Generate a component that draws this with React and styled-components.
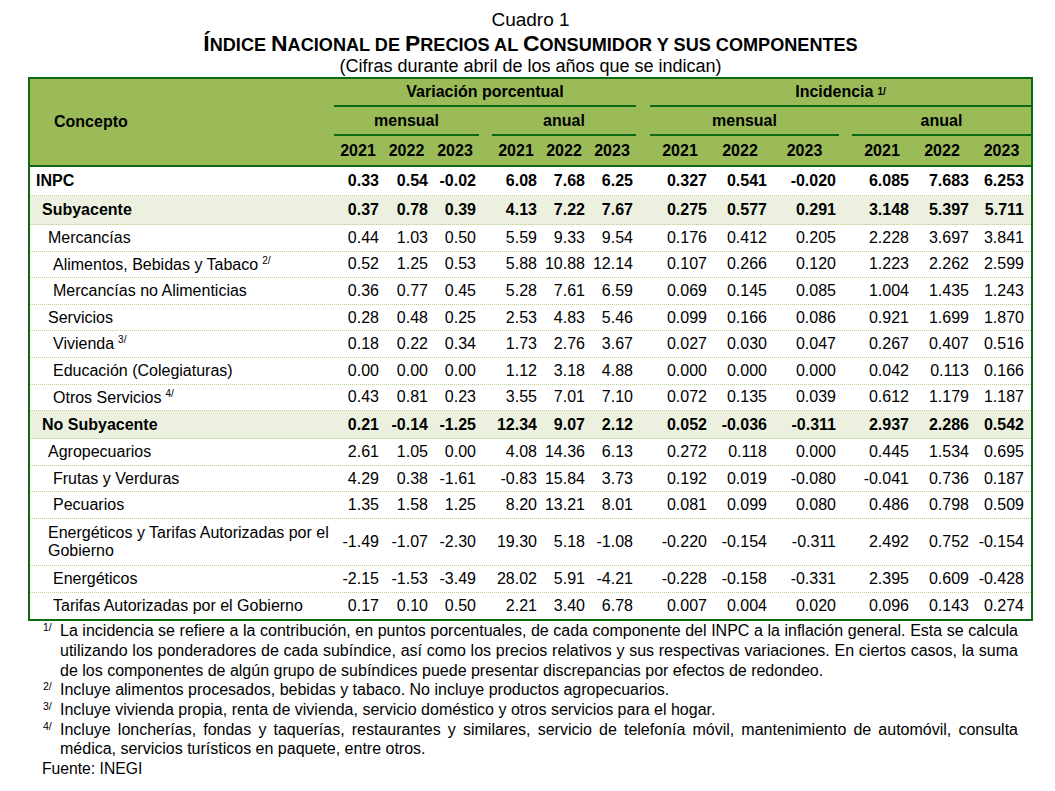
import React from 'react';
import styled, { createGlobalStyle } from 'styled-components';

const GlobalStyle = createGlobalStyle`
  * { box-sizing: border-box; }
  html, body { margin: 0; padding: 0; background: #ffffff; }
  body {
    font-family: "Liberation Sans", Arial, sans-serif;
    color: #000;
  }
`;

// concept | mensual x3 | gap | anual x3 | gap | mensual x3 | gap | anual x3
const COLS = '304px 48px 49px 48px 13px 48px 48px 48px 14px 60px 60px 69px 13px 60px 60px 59px';
const BORDER = '#0e6a12';
const HEAD_BG = '#9bbb59';
const BAND_BG = '#ebf1de';
const DOT = '#b9d18f';

const Page = styled.div`
  width: 1005px;
  margin-left: 28px;
  padding-top: 10px;
`;

const Heading = styled.header`
  display: flex;
  flex-direction: column;
  align-items: center;
  margin-bottom: 1px;
`;

const Cuadro = styled.div`
  font-size: 19px;
  line-height: 20px;
`;

const Title = styled.h1`
  margin: 1px 0 0;
  font-size: 22.9px;
  line-height: 24px;
  font-weight: bold;
  text-transform: uppercase;
`;

const SmallCap = styled.span`
  font-size: 18.1px;
`;

const Subtitle = styled.div`
  margin-top: 0;
  font-size: 18px;
  line-height: 19px;
`;

const Table = styled.div`
  border: 2px solid ${BORDER};
  font-size: 16px;
`;

const Head = styled.div`
  display: grid;
  grid-template-columns: ${COLS};
  grid-template-rows: 28px 29px 29px;
  background: ${HEAD_BG};
  border-bottom: 2px solid ${BORDER};
  font-weight: bold;
`;

const HeadCell = styled.div`
  grid-column: ${p => p.$col};
  grid-row: ${p => p.$row};
  display: flex;
  align-items: center;
  justify-content: center;
  border-bottom: ${p => (p.$rule ? `2px solid ${BORDER}` : 'none')};
`;

const ConceptHead = styled(HeadCell)`
  justify-content: flex-start;
  padding-left: 24px;
`;

const Sup = styled.sup`
  font-size: 10px;
  line-height: 0;
  margin-left: 4px;
  vertical-align: 6px;
`;

const Row = styled.div`
  display: grid;
  grid-template-columns: ${COLS};
  align-items: center;
  height: ${p => p.$h}px;
  background: ${p => (p.$band ? BAND_BG : '#fff')};
  font-weight: ${p => (p.$bold ? 'bold' : 'normal')};
  border-bottom: 1px dotted ${DOT};

  &:last-child {
    border-bottom: none;
  }
  & > :last-child {
    padding-right: 7px;
  }
`;

const Concept = styled.div`
  padding-left: ${p => [6, 12, 18, 23][p.$level]}px;
  line-height: 17.5px;
`;

const Num = styled.div`
  text-align: right;
  padding-right: 3px;
  white-space: nowrap;
`;

const Gap = styled.div``;

const Notes = styled.div`
  padding: 0 15px 0 14px;
  font-size: 16px;
  line-height: 19.7px;
`;

const Note = styled.div`
  display: grid;
  grid-template-columns: 18px 1fr;
`;

const Mark = styled.span`
  font-size: 10.5px;
  line-height: 12px;
  padding-left: 1px;
`;

const NoteText = styled.p`
  margin: 0;
  text-align: justify;
`;

const Source = styled.div`
  font-size: 15.7px;
`;

const smallCaps = text =>
  text.split('').map((ch, i) =>
    ch !== ' ' && ch === ch.toUpperCase() ? ch : <SmallCap key={i}>{ch}</SmallCap>
  );

const rows = [
  { name: 'INPC', level: 0, bold: true, h: 29, v: ['0.33', '0.54', '-0.02', '6.08', '7.68', '6.25', '0.327', '0.541', '-0.020', '6.085', '7.683', '6.253'] },
  { name: 'Subyacente', level: 1, bold: true, band: true, h: 29, v: ['0.37', '0.78', '0.39', '4.13', '7.22', '7.67', '0.275', '0.577', '0.291', '3.148', '5.397', '5.711'] },
  { name: 'Mercancías', level: 2, v: ['0.44', '1.03', '0.50', '5.59', '9.33', '9.54', '0.176', '0.412', '0.205', '2.228', '3.697', '3.841'] },
  { name: 'Alimentos, Bebidas y Tabaco', note: '2/', level: 3, v: ['0.52', '1.25', '0.53', '5.88', '10.88', '12.14', '0.107', '0.266', '0.120', '1.223', '2.262', '2.599'] },
  { name: 'Mercancías no Alimenticias', level: 3, v: ['0.36', '0.77', '0.45', '5.28', '7.61', '6.59', '0.069', '0.145', '0.085', '1.004', '1.435', '1.243'] },
  { name: 'Servicios', level: 2, v: ['0.28', '0.48', '0.25', '2.53', '4.83', '5.46', '0.099', '0.166', '0.086', '0.921', '1.699', '1.870'] },
  { name: 'Vivienda', note: '3/', level: 3, v: ['0.18', '0.22', '0.34', '1.73', '2.76', '3.67', '0.027', '0.030', '0.047', '0.267', '0.407', '0.516'] },
  { name: 'Educación (Colegiaturas)', level: 3, v: ['0.00', '0.00', '0.00', '1.12', '3.18', '4.88', '0.000', '0.000', '0.000', '0.042', '0.113', '0.166'] },
  { name: 'Otros Servicios', note: '4/', level: 3, v: ['0.43', '0.81', '0.23', '3.55', '7.01', '7.10', '0.072', '0.135', '0.039', '0.612', '1.179', '1.187'] },
  { name: 'No Subyacente', level: 1, bold: true, band: true, h: 28, v: ['0.21', '-0.14', '-1.25', '12.34', '9.07', '2.12', '0.052', '-0.036', '-0.311', '2.937', '2.286', '0.542'] },
  { name: 'Agropecuarios', level: 2, v: ['2.61', '1.05', '0.00', '4.08', '14.36', '6.13', '0.272', '0.118', '0.000', '0.445', '1.534', '0.695'] },
  { name: 'Frutas y Verduras', level: 3, v: ['4.29', '0.38', '-1.61', '-0.83', '15.84', '3.73', '0.192', '0.019', '-0.080', '-0.041', '0.736', '0.187'] },
  { name: 'Pecuarios', level: 3, v: ['1.35', '1.58', '1.25', '8.20', '13.21', '8.01', '0.081', '0.099', '0.080', '0.486', '0.798', '0.509'] },
  { name: 'Energéticos y Tarifas Autorizadas por el Gobierno', level: 2, h: 47, v: ['-1.49', '-1.07', '-2.30', '19.30', '5.18', '-1.08', '-0.220', '-0.154', '-0.311', '2.492', '0.752', '-0.154'] },
  { name: 'Energéticos', level: 3, v: ['-2.15', '-1.53', '-3.49', '28.02', '5.91', '-4.21', '-0.228', '-0.158', '-0.331', '2.395', '0.609', '-0.428'] },
  { name: 'Tarifas Autorizadas por el Gobierno', level: 3, v: ['0.17', '0.10', '0.50', '2.21', '3.40', '6.78', '0.007', '0.004', '0.020', '0.096', '0.143', '0.274'] },
];

const notes = [
  { mark: '1/', text: 'La incidencia se refiere a la contribución, en puntos porcentuales, de cada componente del INPC a la inflación general. Esta se calcula utilizando los ponderadores de cada subíndice, así como los precios relativos y sus respectivas variaciones. En ciertos casos, la suma de los componentes de algún grupo de subíndices puede presentar discrepancias por efectos de redondeo.' },
  { mark: '2/', text: 'Incluye alimentos procesados, bebidas y tabaco. No incluye productos agropecuarios.' },
  { mark: '3/', text: 'Incluye vivienda propia, renta de vivienda, servicio doméstico y otros servicios para el hogar.' },
  { mark: '4/', text: 'Incluye loncherías, fondas y taquerías, restaurantes y similares, servicio de telefonía móvil, mantenimiento de automóvil, consulta médica, servicios turísticos en paquete, entre otros.' },
];

// group start columns (1-based grid lines): mensual VP, anual VP, mensual Inc, anual Inc
const groups = [2, 6, 10, 14];

const ValueCells = ({ v }) => (
  <>
    {v.map((val, i) => (
      <React.Fragment key={i}>
        {i > 0 && i % 3 === 0 && <Gap />}
        <Num>{val}</Num>
      </React.Fragment>
    ))}
  </>
);

const App = () => (
  <>
    <GlobalStyle />
    <Page>
      <Heading>
        <Cuadro>Cuadro 1</Cuadro>
        <Title>{smallCaps('Índice Nacional de Precios al Consumidor y sus componentes')}</Title>
        <Subtitle>(Cifras durante abril de los años que se indican)</Subtitle>
      </Heading>

      <Table>
        <Head>
          <ConceptHead $col="1" $row="1 / 4">Concepto</ConceptHead>
          <HeadCell $col="2 / 9" $row="1" $rule>Variación porcentual</HeadCell>
          <HeadCell $col="10 / 17" $row="1" $rule>
            Incidencia<Sup>1/</Sup>
          </HeadCell>
          {groups.map((g, i) => (
            <HeadCell key={g} $col={`${g} / ${g + 3}`} $row="2" $rule>
              {i % 2 === 0 ? 'mensual' : 'anual'}
            </HeadCell>
          ))}
          {groups.map(g =>
            ['2021', '2022', '2023'].map((y, j) => (
              <HeadCell key={`${g}-${y}`} $col={`${g + j}`} $row="3">
                {y}
              </HeadCell>
            ))
          )}
        </Head>

        {rows.map(r => (
          <Row key={r.name} $h={r.h || 26.6} $band={r.band} $bold={r.bold}>
            <Concept $level={r.level}>
              {r.name}
              {r.note && <Sup>{r.note}</Sup>}
            </Concept>
            <ValueCells v={r.v} />
          </Row>
        ))}
      </Table>

      <Notes>
        {notes.map(n => (
          <Note key={n.mark}>
            <Mark>{n.mark}</Mark>
            <NoteText>{n.text}</NoteText>
          </Note>
        ))}
        <Source>Fuente: INEGI</Source>
      </Notes>
    </Page>
  </>
);

export default App;
